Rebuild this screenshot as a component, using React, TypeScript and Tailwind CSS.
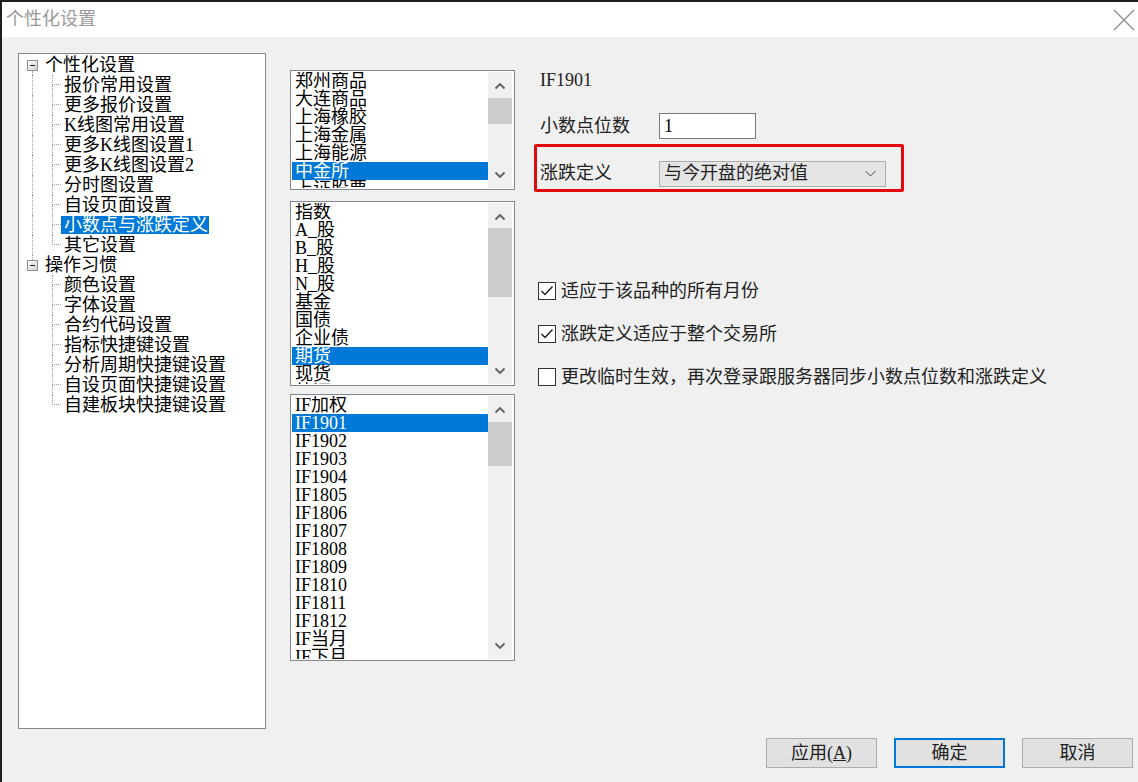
import React from 'react';
import clsx from 'clsx';

const dot = 'border-dotted border-[#a0a0a0]';

const MinusBox = () => (
  <div className="flex h-[11px] w-[11px] items-center justify-center border border-[#919191] bg-linear-to-br from-white to-[#cfcfcf]">
    <div className="h-[1px] w-[5px] bg-[#222]" />
  </div>
);

const RootRow = ({ text, above, below }: { text: string; above?: boolean; below?: boolean }) => (
  <div className="flex h-[20px]">
    <div className="ml-[8px] flex w-[11px] flex-col items-center">
      <div className={clsx('h-[5px] w-0', above && `border-l ${dot}`)} />
      <MinusBox />
      <div className={clsx('w-0 flex-1', below && `border-l ${dot}`)} />
    </div>
    <span className="ml-[7px] leading-[20px]">{text}</span>
  </div>
);

const ChildRow = ({ text, rootLine, last, selected }: { text: string; rootLine?: boolean; last?: boolean; selected?: boolean }) => (
  <div className="flex h-[20px]">
    <div className="flex w-[26px]">{rootLine && <div className={`ml-[13px] h-full border-l ${dot}`} />}</div>
    <div className="ml-[7px] flex w-[9px] flex-col">
      <div className={`h-[10px] border-b border-l ${dot}`} />
      <div className={clsx('flex-1', !last && `border-l ${dot}`)} />
    </div>
    <span className={clsx('pl-[3px] pr-[1px]', selected ? 'my-[1px] bg-[#0078d7] leading-[18px] text-white' : 'leading-[20px]')}>
      {text}
    </span>
  </div>
);

const group1 = ['报价常用设置', '更多报价设置', 'K线图常用设置', '更多K线图设置1', '更多K线图设置2', '分时图设置', '自设页面设置', '小数点与涨跌定义', '其它设置'];
const group2 = ['颜色设置', '字体设置', '合约代码设置', '指标快捷键设置', '分析周期快捷键设置', '自设页面快捷键设置', '自建板块快捷键设置'];

const Chevron = ({ up }: { up?: boolean }) => (
  <svg width="12" height="8" viewBox="0 0 12 8">
    <polyline points={up ? '1.5,6.5 6,2 10.5,6.5' : '1.5,1.5 6,6 10.5,1.5'} fill="none" stroke="#606060" strokeWidth="1.8" />
  </svg>
);

const ListBox = ({ items, selected, className, thumb }: { items: string[]; selected: number; className: string; thumb: string }) => (
  <div className={clsx('flex border border-[#828790] bg-white p-[1px]', className)}>
    <div className="flex-1 overflow-hidden">
      {items.map((t, i) => (
        <div key={t} className={clsx('h-[18px] pl-[3px] leading-[18px]', i === selected ? 'bg-[#0078d7] text-white' : 'text-black')}>
          {t}
        </div>
      ))}
    </div>
    <div className="mr-[1px] flex w-[24px] flex-col bg-[#f0f0f0]">
      <div className="flex h-[25px] items-center justify-center pt-[3px]"><Chevron up /></div>
      <div className={clsx('bg-[#cdcdcd]', thumb)} />
      <div className="flex-1" />
      <div className="flex h-[25px] items-center justify-center pb-[1px]"><Chevron /></div>
    </div>
  </div>
);

const CheckRow = ({ checked, text }: { checked?: boolean; text: string }) => (
  <div className="flex h-[20px] items-center">
    <div className="ml-[4px] flex h-[18px] w-[18px] items-center justify-center border border-[#333] bg-white">
      {checked && (
        <svg width="16" height="16" viewBox="0 0 16 16">
          <polyline points="2.5,8 6,11.5 13.5,3.5" fill="none" stroke="#222" strokeWidth="1.5" />
        </svg>
      )}
    </div>
    <span className="ml-[5px] text-[#222]">{text}</span>
  </div>
);

const Btn = ({ children, primary }: { children: React.ReactNode; primary?: boolean }) => (
  <div
    className={clsx(
      'flex h-[30px] w-[111px] items-center justify-center bg-[#e1e1e1] text-[#222]',
      primary ? 'border-2 border-[#0078d7]' : 'border border-[#adadad]'
    )}
  >
    {children}
  </div>
);

export default function App() {
  return (
    <div className="flex h-[782px] w-[1138px] flex-col overflow-hidden border-l-2 border-t-2 border-[#1e1e1e] bg-[#f0f0f0] font-['Liberation_Serif','Noto_Sans_CJK_SC',serif] text-[18px] text-black">
      <div className="flex h-[35px] items-center justify-between bg-white pl-[4px] pr-[3px]">
        <span className="text-[#9a9a9a]">个性化设置</span>
        <svg width="22" height="22" viewBox="0 0 22 22">
          <path d="M1 1 L21 21 M21 1 L1 21" stroke="#8c8c8c" strokeWidth="1.2" />
        </svg>
      </div>

      <div className="flex items-start">
        <div className="ml-[16px] mt-[16px] h-[676px] w-[248px] border border-[#828790] bg-white pt-[1px]">
          <RootRow text="个性化设置" below />
          {group1.map((t, i) => (
            <ChildRow key={t} text={t} rootLine last={i === group1.length - 1} selected={t === '小数点与涨跌定义'} />
          ))}
          <RootRow text="操作习惯" above />
          {group2.map((t, i) => (
            <ChildRow key={t} text={t} last={i === group2.length - 1} />
          ))}
        </div>

        <div className="ml-[24px] mt-[33px] flex w-[225px] flex-col">
          <ListBox
            className="h-[120px]"
            items={['郑州商品', '大连商品', '上海橡胶', '上海金属', '上海能源', '中金所', '上证股票']}
            selected={5}
            thumb="h-[26px] mt-[1px]"
          />
          <ListBox
            className="mt-[11px] h-[185px]"
            items={['指数', 'A_股', 'B_股', 'H_股', 'N_股', '基金', '国债', '企业债', '期货', '现货', '外汇']}
            selected={8}
            thumb="h-[69px]"
          />
          <ListBox
            className="mt-[8px] h-[267px]"
            items={['IF加权', 'IF1901', 'IF1902', 'IF1903', 'IF1904', 'IF1805', 'IF1806', 'IF1807', 'IF1808', 'IF1809', 'IF1810', 'IF1811', 'IF1812', 'IF当月', 'IF下月', 'IF下季']}
            selected={1}
            thumb="h-[44px] mt-[1px]"
          />
        </div>

        <div className="ml-[19px] mt-[33px] flex flex-col text-[#222]">
          <div className="h-[20px] pl-[6px] leading-[20px]">IF1901</div>
          <div className="mt-[23px] flex h-[26px] items-center">
            <span className="w-[125px] pl-[6px]">小数点位数</span>
            <div className="flex h-[26px] w-[97px] items-center border border-[#7a7a7a] bg-white pl-[4px] text-black">1</div>
          </div>
          <div className="mt-[5px] flex w-[370px] items-center rounded-[2px] border-[3px] border-[#e00b0b] pb-[2px] pl-[3px] pt-[13px]">
            <span className="w-[119px]">涨跌定义</span>
            <div className="flex h-[26px] w-[227px] items-center justify-between border border-[#adadad] bg-[#e5e5e5] pl-[4px] pr-[9px]">
              <span>与今开盘的绝对值</span>
              <svg width="11" height="7" viewBox="0 0 11 7">
                <polyline points="0.5,1 5.5,6 10.5,1" fill="none" stroke="#444" strokeWidth="1" />
              </svg>
            </div>
          </div>
          <div className="mt-[89px] flex flex-col gap-[23px]">
            <CheckRow checked text="适应于该品种的所有月份" />
            <CheckRow checked text="涨跌定义适应于整个交易所" />
            <CheckRow text="更改临时生效，再次登录跟服务器同步小数点位数和涨跌定义" />
          </div>
        </div>
      </div>

      <div className="mt-[9px] flex justify-end gap-[17px] pr-[5px]">
        <Btn>
          应用(<span className="underline">A</span>)
        </Btn>
        <Btn primary>确定</Btn>
        <Btn>取消</Btn>
      </div>
    </div>
  );
}
